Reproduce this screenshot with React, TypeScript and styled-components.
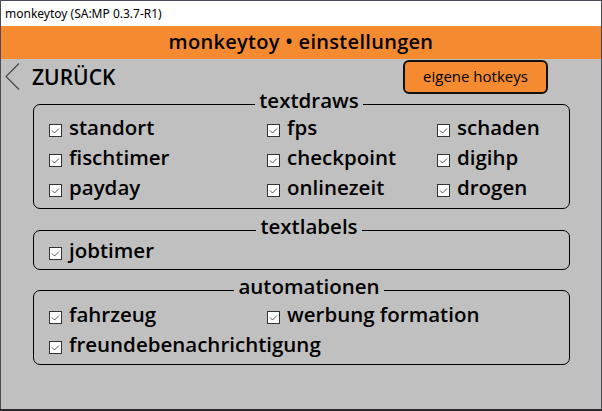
import React from "react";
import styled, { createGlobalStyle } from "styled-components";

const GlobalStyle = createGlobalStyle`
  html, body {
    margin: 0;
    padding: 0;
    background: #2d2830;
  }
  body {
    width: 602px;
    height: 411px;
    overflow: hidden;
  }
  * { box-sizing: border-box; }
`;

const Window = styled.div`
  width: 602px;
  height: 409px;
  display: flex;
  flex-direction: column;
  border: 1px solid #4b4a55;
  border-bottom: none;
  background: #c0c0c0;
  font-family: "Open Sans", "Noto Sans", sans-serif;
  color: #000;
`;

const TitleBar = styled.div`
  height: 25px;
  flex: none;
  display: flex;
  align-items: center;
  padding-left: 4px;
  background: #ffffff;
  font-family: "Noto Sans", "Open Sans", sans-serif;
  font-size: 12px;
  color: #000;
`;

const Header = styled.div`
  height: 33px;
  flex: none;
  display: flex;
  align-items: center;
  justify-content: center;
  background: #f48b31;
  font-size: 20px;
  font-weight: 600;
  letter-spacing: 0.3px;
  padding-bottom: 3px;
`;

const Body = styled.div`
  flex: 1;
  display: flex;
  flex-direction: column;
`;

const TopRow = styled.div`
  height: 34px;
  flex: none;
  display: flex;
  align-items: center;
  justify-content: space-between;
  padding: 1px 53px 0 4px;
`;

const BackLink = styled.div`
  display: flex;
  align-items: center;
  gap: 12px;
  font-size: 21px;
  font-weight: 600;
  padding-top: 1px;
`;

const Chevron = styled.svg`
  width: 15px;
  height: 27px;
  margin-top: -2px;
`;

const HotkeyButton = styled.button`
  width: 145px;
  height: 34px;
  border: 2px solid #111;
  border-radius: 6px;
  background: #f48b31;
  font-family: "Open Sans", "Noto Sans", sans-serif;
  font-size: 15px;
  font-weight: 500;
  color: #000;
  padding: 0 0 2px;
  cursor: pointer;
`;

const Groups = styled.div`
  display: flex;
  flex-direction: column;
  padding: 0 31px 0 32px;
`;

const Group = styled.fieldset<{ $top: number; $pt: number; $pb: number }>`
  margin: ${(p) => p.$top}px 0 0;
  padding: ${(p) => p.$pt}px 0 ${(p) => p.$pb}px 15px;
  border: 1px solid #000;
  border-radius: 7px;
  min-width: 0;
`;

const Legend = styled.legend`
  margin: 0 auto;
  padding: 0 4px 8px;
  font-size: 20.5px;
  font-weight: 600;
  line-height: 14px;
`;

const Grid = styled.div`
  display: grid;
  grid-template-columns: 218px 170px 1fr;
  grid-auto-rows: 24px;
  row-gap: 6px;
`;

const Item = styled.label<{ $span?: boolean }>`
  display: flex;
  align-items: center;
  gap: 7px;
  font-size: 20.5px;
  font-weight: 600;
  white-space: nowrap;
  grid-column: ${(p) => (p.$span ? "1 / -1" : "auto")};
`;

const Text = styled.span`
  margin-bottom: 6px;
`;

const Box = styled.span`
  width: 13px;
  height: 13px;
  flex: none;
  display: flex;
  border: 1px solid #333;
  background: #fff;
`;

function Check({ label, span }: { label: string; span?: boolean }) {
  return (
    <Item $span={span}>
      <Box>
        <svg width="11" height="11" viewBox="0 0 11 11">
          <path d="M2 5.5 L4.5 8 L9 3.5" fill="none" stroke="#555" strokeWidth="1" />
        </svg>
      </Box>
      <Text>{label}</Text>
    </Item>
  );
}

export default function App() {
  return (
    <>
      <GlobalStyle />
      <Window>
        <TitleBar>monkeytoy (SA:MP 0.3.7-R1)</TitleBar>
        <Header>monkeytoy • einstellungen</Header>
        <Body>
          <TopRow>
            <BackLink>
              <Chevron viewBox="0 0 15 27">
                <path d="M14 0.5 L1 13.5 L14 26.5" fill="none" stroke="#444" strokeWidth="1.1" />
              </Chevron>
              ZURÜCK
            </BackLink>
            <HotkeyButton>eigene hotkeys</HotkeyButton>
          </TopRow>
          <Groups>
            <Group $top={0} $pt={3} $pb={6}>
              <Legend>textdraws</Legend>
              <Grid>
                <Check label="standort" />
                <Check label="fps" />
                <Check label="schaden" />
                <Check label="fischtimer" />
                <Check label="checkpoint" />
                <Check label="digihp" />
                <Check label="payday" />
                <Check label="onlinezeit" />
                <Check label="drogen" />
              </Grid>
            </Group>
            <Group $top={10} $pt={0} $pb={4}>
              <Legend>textlabels</Legend>
              <Grid>
                <Check label="jobtimer" />
              </Grid>
            </Group>
            <Group $top={9} $pt={4} $pb={5}>
              <Legend>automationen</Legend>
              <Grid>
                <Check label="fahrzeug" />
                <Check label="werbung formation" />
                <span />
                <Check label="freundebenachrichtigung" span />
              </Grid>
            </Group>
          </Groups>
        </Body>
      </Window>
    </>
  );
}
